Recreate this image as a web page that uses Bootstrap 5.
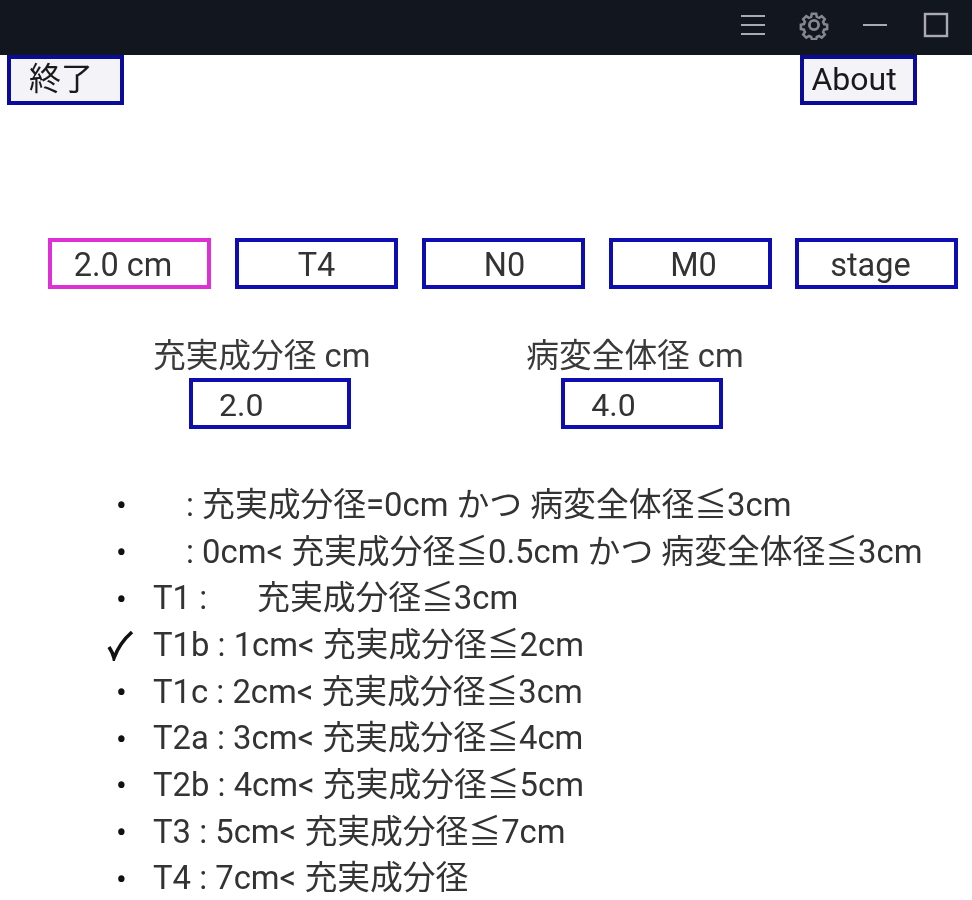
<!DOCTYPE html>
<html lang="ja">
<head>
<meta charset="utf-8">
<title>TNM</title>
<link href="https://cdn.jsdelivr.net/npm/bootstrap@5.3.0/dist/css/bootstrap.min.css" rel="stylesheet">
<style>
html,body{margin:0;background:#fff;overflow:hidden}
body{width:972px;height:900px;font-family:Roboto,"Noto Sans CJK JP",sans-serif;font-size:32px;color:#333;line-height:1}
.pagewrap{filter:blur(.45px)}
.titlebar{height:55px;background:#12161f;padding-right:6px;padding-bottom:5px}
.tb-icon{width:61px;height:50px;display:flex;align-items:center;justify-content:center}
.tb-icon svg{display:block}
.topbtn{width:117px;height:50px;border:4px solid #0b0b9a;background:#f3f3f8;color:#1a1a1a;font-size:32px;line-height:1;padding:0 9px 3px 0;border-radius:0}
.toprow{padding:0 55px 0 7px;height:183px}
.valrow{padding-left:48px;gap:24px}
.valbox{width:163px;height:51px;border:4px solid #0e0eb0;display:flex;align-items:center;justify-content:center;font-size:32.5px;background:#fff;padding-top:3px}
.valbox:nth-child(1){padding-right:13px}
.valbox:nth-child(3){padding-left:2px}
.valbox:nth-child(4){padding-left:6px}
.valbox:nth-child(5){padding-right:12px;margin-left:-1px}
.valbox.active{border-color:#dd30d5}
.inputs{margin-top:38px;padding-left:153px;gap:156px}
.fieldlabel{font-size:32.7px;height:51px;line-height:58px;white-space:nowrap;color:#3a3a3a}
.inbox{width:162px;height:51px;border:4px solid #0e0eb0;font-size:32px;display:flex;align-items:center;padding-left:26px;padding-top:3px;margin-left:36px}
.inbox.second{margin-left:35px}
.crit{margin:53px 0 0;padding:0;list-style:none}
.crit li{height:46.7px;display:flex;align-items:center;white-space:nowrap;font-size:32.8px;position:relative;padding-left:153px;color:#333}
.crit li .mk{width:153px;margin-left:-153px;padding-left:116px;font-size:32px;color:#111;flex:none}
.crit li .mk.on{padding-left:105px}
.crit li .mk svg{display:block}
.gap-a{display:inline-block;width:33px}
.gap-b{display:inline-block;width:50px}
</style>
</head>
<body>
<div class="pagewrap">
<div class="titlebar d-flex justify-content-end align-items-center">
  <div class="tb-icon"><svg width="28" height="22" viewBox="0 0 28 22" fill="none" stroke="#a9abb0" stroke-width="2"><path d="M2 2h24M2 11h24M2 20h24"/></svg></div>
  <div class="tb-icon"><svg width="30" height="30" viewBox="0 0 30 30" fill="none" stroke="#85878c" stroke-width="2.8"><circle cx="15" cy="15" r="4.6"/><path d="M12.6 2.5h4.8l.7 3.4 2.6 1.1 2.9-1.9 3.4 3.4-1.9 2.9 1.1 2.6 3.4.7v4.8l-3.4.7-1.1 2.6 1.9 2.9-3.4 3.4-2.9-1.9-2.6 1.1-.7 2.6h-4.8l-.7-2.6-2.6-1.1-2.9 1.9-3.4-3.4 1.9-2.9-1.1-2.6-3.4-.7v-4.8l3.4-.7 1.1-2.6-1.9-2.9 3.4-3.4 2.9 1.9 2.6-1.1z" transform="translate(1.5 1.5) scale(.9)"/></svg></div>
  <div class="tb-icon"><svg width="28" height="6" viewBox="0 0 28 6" stroke="#a9abb0" stroke-width="2"><path d="M2 3h24"/></svg></div>
  <div class="tb-icon"><svg width="26" height="26" viewBox="0 0 26 26" fill="none" stroke="#a9abb0" stroke-width="2.4"><rect x="2" y="2" width="22" height="22"/></svg></div>
</div>
<div class="toprow d-flex justify-content-between align-items-start">
  <button type="button" class="btn topbtn">終了</button>
  <button type="button" class="btn topbtn">About</button>
</div>
<div class="valrow d-flex">
  <div class="valbox active">2.0 cm</div>
  <div class="valbox">T4</div>
  <div class="valbox">N0</div>
  <div class="valbox">M0</div>
  <div class="valbox">stage</div>
</div>
<div class="inputs d-flex">
  <div>
    <div class="fieldlabel">充実成分径 cm</div>
    <div class="inbox">2.0</div>
  </div>
  <div>
    <div class="fieldlabel">病変全体径 cm</div>
    <div class="inbox second">4.0</div>
  </div>
</div>
<ul class="crit">
  <li><span class="mk">•</span><span class="gap-a"></span>: 充実成分径=0cm かつ 病変全体径≦3cm</li>
  <li><span class="mk">•</span><span class="gap-a"></span>: 0cm&lt; 充実成分径≦0.5cm かつ 病変全体径≦3cm</li>
  <li><span class="mk">•</span>T1 :<span class="gap-b"></span>充実成分径≦3cm</li>
  <li><span class="mk on"><svg width="30" height="32" viewBox="0 0 30 32" fill="none" stroke="#111" stroke-width="3.6"><path d="M4 18c2 3 4 6 5 11C13 18 19 10 27 3"/></svg></span>T1b : 1cm&lt; 充実成分径≦2cm</li>
  <li><span class="mk">•</span>T1c : 2cm&lt; 充実成分径≦3cm</li>
  <li><span class="mk">•</span>T2a : 3cm&lt; 充実成分径≦4cm</li>
  <li><span class="mk">•</span>T2b : 4cm&lt; 充実成分径≦5cm</li>
  <li><span class="mk">•</span>T3 : 5cm&lt; 充実成分径≦7cm</li>
  <li><span class="mk">•</span>T4 : 7cm&lt; 充実成分径</li>
</ul>
</div>
<script src="https://cdn.jsdelivr.net/npm/bootstrap@5.3.0/dist/js/bootstrap.bundle.min.js"></script>
</body>
</html>
